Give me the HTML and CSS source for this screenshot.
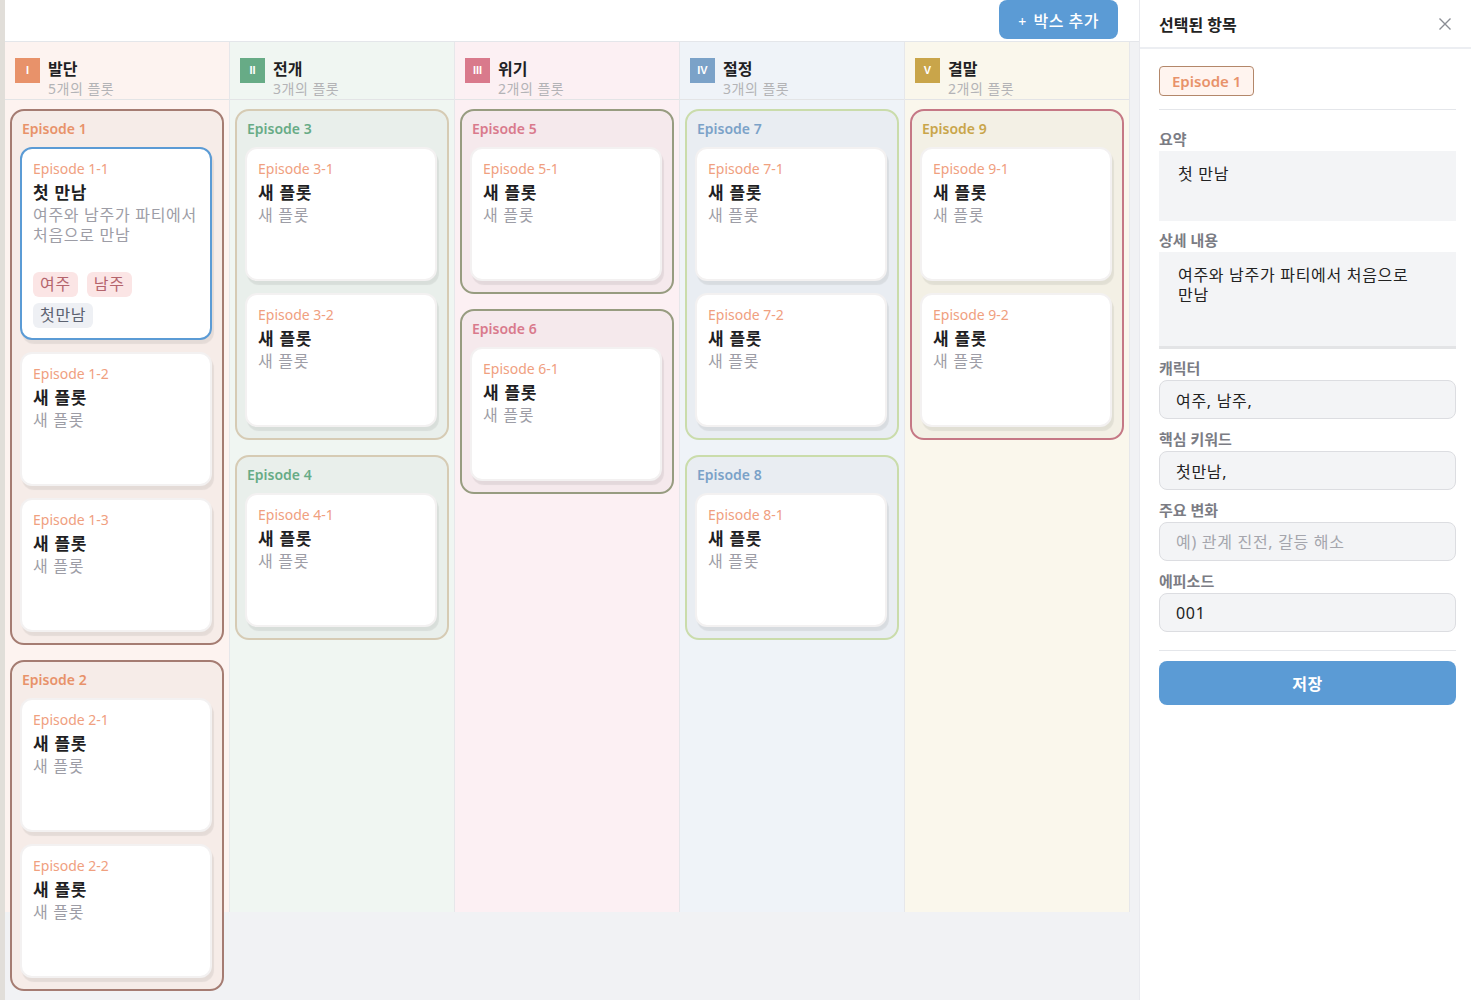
FILE: index.html
```html
<!DOCTYPE html>
<html lang="ko">
<head>
    <meta charset="UTF-8">
    <meta name="viewport" content="width=device-width, initial-scale=1.0">
    <title>플롯 보드</title>
    <link rel="stylesheet" href="styles.css">
</head>
<body>

    <div class="app">
        <div class="main">
            <div class="topbar">
                <button class="add-btn"><span class="plus">+</span> 박스 추가</button>
            </div>
            <div class="board" id="board"></div>
        </div>

        <!-- Detail panel -->
        <aside class="sidebar">
            <div class="sidebar-header">
                <h3>선택된 항목</h3>
                <svg class="close" width="14" height="14" viewBox="0 0 14 14">
                    <path d="M1.5 1.5 L12.5 12.5 M12.5 1.5 L1.5 12.5" stroke="#8a8d94" stroke-width="1.4" fill="none"/>
                </svg>
            </div>
            <div class="sidebar-body">
                <span class="episode-chip">Episode 1</span>
                <hr class="divider">

                <label class="field-label">요약</label>
                <textarea class="field-area area-short">첫 만남</textarea>

                <label class="field-label">상세 내용</label>
                <textarea class="field-area area-long">여주와 남주가 파티에서 처음으로 만남</textarea>

                <label class="field-label">캐릭터</label>
                <input class="field-input" type="text" value="여주, 남주,">

                <label class="field-label">핵심 키워드</label>
                <input class="field-input" type="text" value="첫만남,">

                <label class="field-label">주요 변화</label>
                <input class="field-input" type="text" placeholder="예) 관계 진전, 갈등 해소">

                <label class="field-label">에피소드</label>
                <input class="field-input" type="text" value="001">

                <hr class="divider divider-bottom">
                <button class="save-btn">저장</button>
            </div>
        </aside>
    </div>

    <script>
        const columns = [
            { cls: "col-intro", num: "I", name: "발단", count: 5, boxes: [
                { title: "Episode 1", plots: [
                    { label: "Episode 1-1", title: "첫 만남", desc: "여주와 남주가 파티에서 처음으로 만남",
                      chars: ["여주", "남주"], keys: ["첫만남"], selected: true },
                    { label: "Episode 1-2" },
                    { label: "Episode 1-3" }
                ]},
                { title: "Episode 2", plots: [{ label: "Episode 2-1" }, { label: "Episode 2-2" }] }
            ]},
            { cls: "col-rise", num: "II", name: "전개", count: 3, boxes: [
                { title: "Episode 3", plots: [{ label: "Episode 3-1" }, { label: "Episode 3-2" }] },
                { title: "Episode 4", plots: [{ label: "Episode 4-1" }] }
            ]},
            { cls: "col-crisis", num: "III", name: "위기", count: 2, boxes: [
                { title: "Episode 5", plots: [{ label: "Episode 5-1" }] },
                { title: "Episode 6", plots: [{ label: "Episode 6-1" }] }
            ]},
            { cls: "col-climax", num: "IV", name: "절정", count: 3, boxes: [
                { title: "Episode 7", plots: [{ label: "Episode 7-1" }, { label: "Episode 7-2" }] },
                { title: "Episode 8", plots: [{ label: "Episode 8-1" }] }
            ]},
            { cls: "col-ending", num: "V", name: "결말", count: 2, boxes: [
                { title: "Episode 9", plots: [{ label: "Episode 9-1" }, { label: "Episode 9-2" }] }
            ]}
        ];

        function plotCard(plot) {
            let html = `<div class="plot-card${plot.selected ? " selected" : ""}">`;
            html += `<div class="plot-label">${plot.label}</div>`;
            html += `<div class="plot-title">${plot.title || "새 플롯"}</div>`;
            html += `<div class="plot-desc">${plot.desc || "새 플롯"}</div>`;
            if (plot.chars || plot.keys) {
                html += `<div class="tags">`;
                (plot.chars || []).forEach(t => html += `<span class="tag tag-char">${t}</span>`);
                (plot.keys || []).forEach(t => html += `<span class="tag tag-key">${t}</span>`);
                html += `</div>`;
            }
            return html + `</div>`;
        }

        const board = document.getElementById("board");
        columns.forEach(col => {
            let html = `<div class="column ${col.cls}">
                <div class="column-header">
                    <span class="badge">${col.num}</span>
                    <div>
                        <div class="column-title">${col.name}</div>
                        <div class="column-count">${col.count}개의 플롯</div>
                    </div>
                </div>
                <div class="column-body">`;
            col.boxes.forEach(box => {
                html += `<div class="episode-box"><div class="episode-title">${box.title}</div>`;
                box.plots.forEach(p => html += plotCard(p));
                html += `</div>`;
            });
            html += `</div></div>`;
            board.insertAdjacentHTML("beforeend", html);
        });
    </script>
</body>
</html>
```

FILE: styles.css
```css
* {
    box-sizing: border-box;
}

body {
    margin: 0;
    height: 1000px;
    overflow: hidden;
    font-family: "Noto Sans", "Noto Sans CJK KR", sans-serif;
    color: #222;
    background-color: #f1f2f4;
    word-break: keep-all;
}

.app {
    display: flex;
    height: 100%;
    border-left: 5px solid #e1ded9;
}

.main {
    flex: 1;
    min-width: 0;
}

.topbar {
    height: 42px;
    background: white;
    border-bottom: 1px solid #e4e6ea;
    display: flex;
    justify-content: flex-end;
    padding-right: 21px;
}

.add-btn {
    height: 39px;
    padding: 0 19px;
    border: none;
    border-radius: 8px;
    background-color: #5b9bd5;
    color: white;
    font-family: inherit;
    font-size: 16px;
    font-weight: 500;
    letter-spacing: 0.5px;
    cursor: pointer;
}
.add-btn .plus {
    font-size: 14px;
    margin-right: 2px;
}

/* Board */
.board {
    display: flex;
    height: 870px;
}

.column {
    width: 225px;
    flex-shrink: 0;
    background: var(--col-bg);
    border-right: 1px solid #e6e7ea;
}

.col-intro  { --col-bg: #fdf3f0; --accent: #e8926a; --box-bg: #f6ece8; --box-border: #a57c72; }
.col-rise   { --col-bg: #f0f6f2; --accent: #67ab86; --box-bg: #e9efeb; --box-border: #d6cbb4; }
.col-crisis { --col-bg: #fcf0f3; --accent: #d97a8c; --box-bg: #f5e9ec; --box-border: #979c80; }
.col-climax { --col-bg: #eff3f8; --accent: #7ba2c8; --box-bg: #e9edf2; --box-border: #cadcab; }
.col-ending { --col-bg: #faf7ec; --accent: #c9a54a; --box-bg: #f3f0e5; --box-border: #c57885; }

.column-header {
    height: 58px;
    display: flex;
    align-items: flex-start;
    gap: 8px;
    padding: 16px 10px 0;
    border-bottom: 1px solid #e3e4e6;
}

.badge {
    width: 25px;
    height: 25px;
    flex-shrink: 0;
    background: var(--accent);
    color: white;
    font-family: "Liberation Sans", Arial, sans-serif;
    font-size: 11px;
    font-weight: 700;
    line-height: 25px;
    text-align: center;
}

.column-title {
    margin-top: 1px;
    font-size: 16px;
    font-weight: 700;
    line-height: 21px;
    color: #1f1f24;
}

.column-count {
    font-size: 14px;
    line-height: 18px;
    letter-spacing: 0.5px;
    color: #b3b3b6;
}

.column-body {
    padding: 9px 5px 0;
}

.episode-box {
    background: var(--box-bg);
    border: 2px solid var(--box-border);
    border-radius: 14px;
    padding: 8px 10px 11px 8px;
    margin-bottom: 15px;
}

.episode-title {
    color: var(--accent);
    font-size: 14px;
    font-weight: 600;
    line-height: 20px;
    padding-left: 2px;
    margin-bottom: 8px;
}

.plot-card {
    background: white;
    border: 2px solid #f3f1f1;
    border-radius: 12px;
    min-height: 134px;
    padding: 10px 11px 10px;
    margin-bottom: 12px;
    box-shadow: 2px 4px 1px rgba(0, 0, 0, 0.07);
}
.plot-card:last-child {
    margin-bottom: 0;
}
.plot-card.selected {
    border-color: #5b9bd5;
}

.plot-label {
    color: #f0a07f;
    font-size: 14px;
    line-height: 20px;
}

.plot-title {
    margin-top: 2px;
    font-size: 17px;
    font-weight: 700;
    line-height: 24px;
    letter-spacing: 0.7px;
    color: #1f1f24;
}

.plot-desc {
    font-size: 16px;
    line-height: 20px;
    letter-spacing: 0.7px;
    color: #9d9da6;
}

.tags {
    display: flex;
    flex-wrap: wrap;
    gap: 6px 9px;
    margin-top: 27px;
}

.tag {
    height: 25px;
    line-height: 25px;
    padding: 0 7px;
    border-radius: 6px;
    font-size: 16px;
    letter-spacing: 0.7px;
}
.tag-char { background: #fbe5e5; color: #b4646c; }
.tag-key  { background: #eef0f4; color: #5c6270; }

/* Sidebar */
.sidebar {
    width: 332px;
    flex-shrink: 0;
    background: white;
    border-left: 1px solid #e9eaee;
}

.sidebar-header {
    height: 49px;
    display: flex;
    align-items: center;
    justify-content: space-between;
    padding: 0 19px 0 19px;
    border-bottom: 2px solid #eceef2;
}

.sidebar-header h3 {
    margin: 0;
    font-size: 16px;
    font-weight: 700;
}

.sidebar-body {
    display: flex;
    flex-direction: column;
    align-items: flex-start;
    padding: 17px 15px 0 19px;
}

.episode-chip {
    height: 30px;
    line-height: 28px;
    padding: 0 12px;
    border: 1px solid #b3876a;
    border-radius: 4px;
    background: #fff4ef;
    color: #e8926a;
    font-size: 15px;
    font-weight: 600;
}

.divider {
    width: 100%;
    border: none;
    border-top: 1px solid #e4e6ea;
    margin: 13px 0 19px;
}
.divider-bottom {
    margin: 8px 0 10px;
}

.field-label {
    font-size: 15px;
    font-weight: 700;
    line-height: 20px;
    color: #7b7c84;
    margin-bottom: 2px;
}

.field-area,
.field-input {
    width: 100%;
    font-family: inherit;
    font-size: 16px;
    letter-spacing: 0.7px;
    color: #222;
    background: #f3f4f6;
    margin-bottom: 9px;
}

.field-area {
    border: none;
    resize: none;
    line-height: 20px;
    padding: 13px 30px 13px 19px;
}
.area-short { height: 70px; }
.area-long {
    height: 97px;
    border-bottom: 3px solid #e3e4e6;
}

.field-input {
    height: 39px;
    padding: 0 16px;
    border: 1px solid #dcdde1;
    border-radius: 8px;
    margin-bottom: 10px;
}
.field-input::placeholder {
    color: #a5a6ad;
}

.save-btn {
    width: 100%;
    height: 44px;
    border: none;
    border-radius: 8px;
    background: #5b9bd5;
    color: white;
    font-family: inherit;
    font-size: 16px;
    font-weight: 700;
    letter-spacing: 0.5px;
    cursor: pointer;
}
```
